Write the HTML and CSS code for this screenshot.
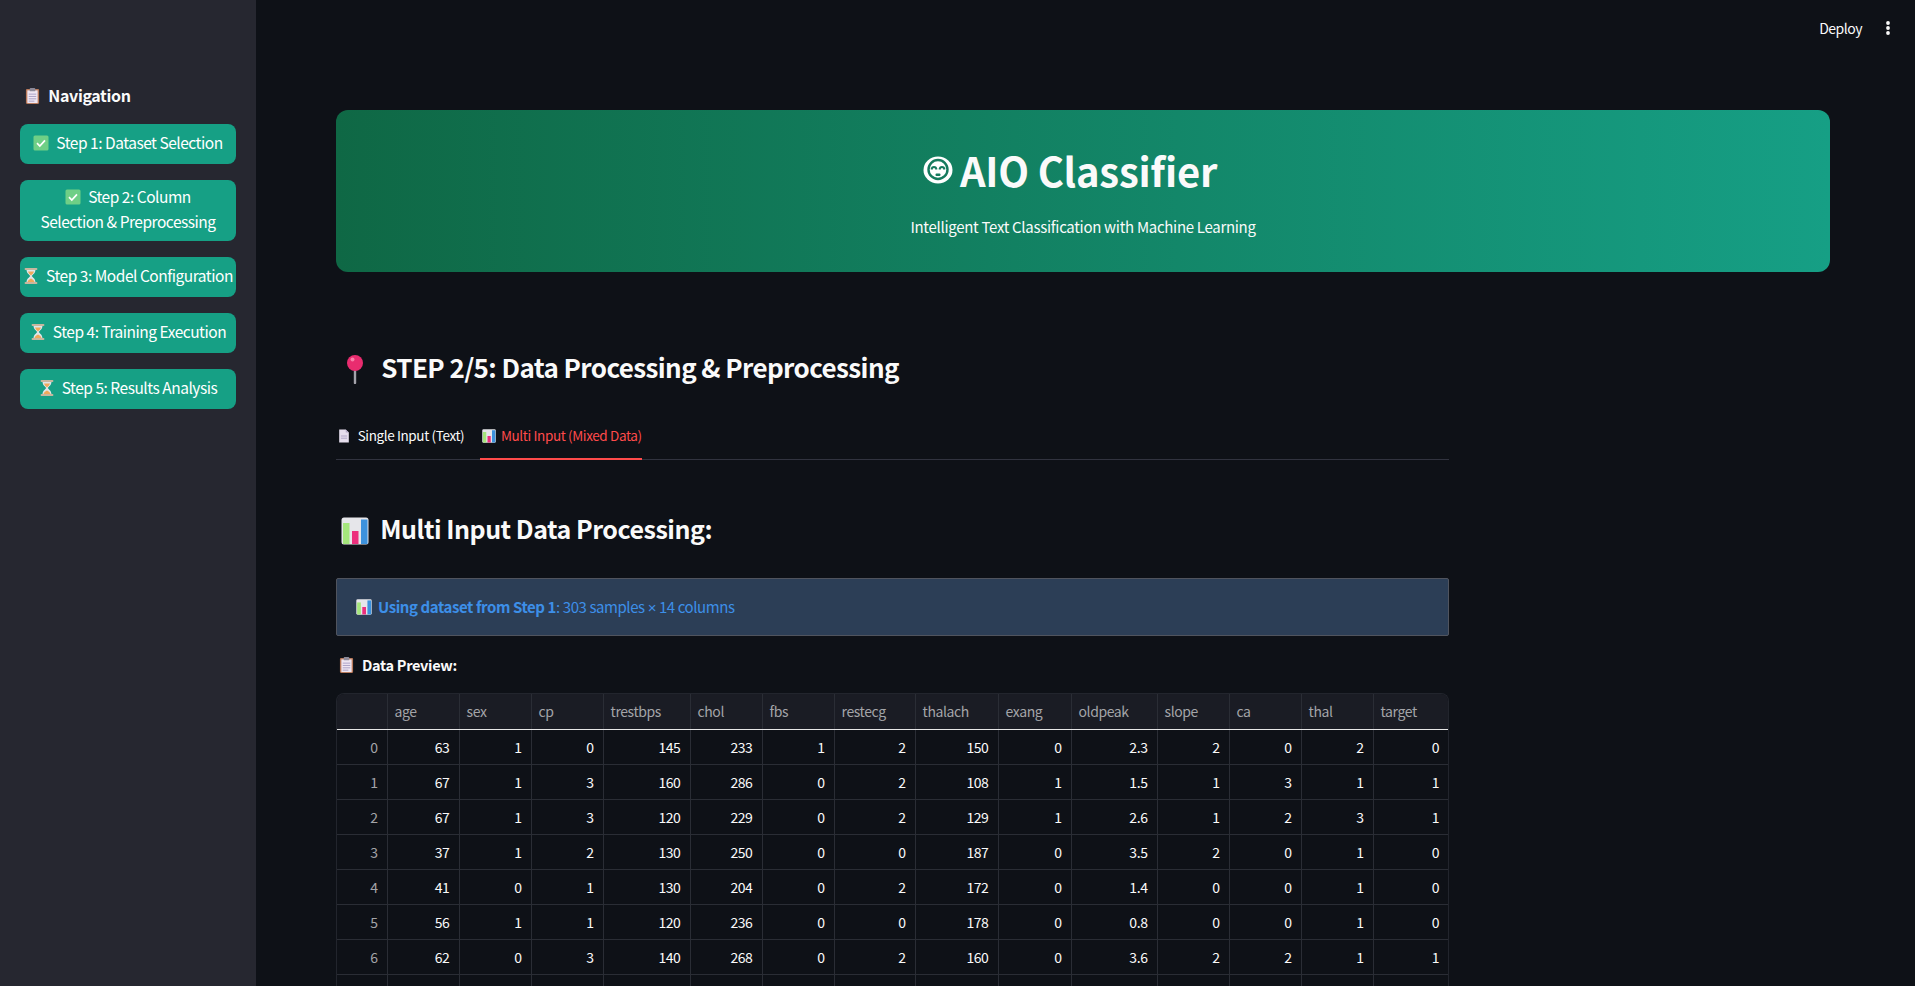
FILE: index.html
```html
<!DOCTYPE html>
<html lang="en">
<head>
  <meta charset="UTF-8">
  <meta name="viewport" content="width=device-width, initial-scale=1.0">
  <title>AIO Classifier</title>
  <link rel="stylesheet" href="styles.css">
</head>
<body>
  <!-- emoji drawn once, reused below -->
  <svg class="defs" width="0" height="0">
    <symbol id="i-clip" viewBox="0 0 16 18">
      <rect x="1" y="1.5" width="14" height="16" rx="1.2" fill="#b9795a"/>
      <rect x="2.5" y="3" width="11" height="13.5" fill="#efe6f2"/>
      <rect x="5" y="0.5" width="6" height="3.5" rx="1" fill="#8d8a99"/>
      <path d="M4 7h8M4 9.5h8M4 12h8M4 14.5h6" stroke="#a99fc4" stroke-width="1"/>
    </symbol>
    <symbol id="i-check" viewBox="0 0 16 16">
      <rect x="0.5" y="0.5" width="15" height="15" rx="1.5" fill="#6fcf86"/>
      <path d="M4 8.2l2.8 2.8L12 5.4" fill="none" stroke="#fff" stroke-width="1.7"/>
    </symbol>
    <symbol id="i-glass" viewBox="0 0 14 16">
      <path d="M2.5 1.5h9c0 4-3 5-3.7 6.500.7 1.500 3.700 2.500 3.700 6.500h-9c0-4 3-5 3.700-6.500C5.500 6.500 2.500 5.500 2.500 1.500z" fill="#dfe6ea"/>
      <path d="M4 3.500h6c-.5 2-2.300 3-3 4-.7-1-2.500-2-3-4zM3.500 14c.3-2 2.500-3 3.500-3.500 1 .5 3.200 1.500 3.500 3.500z" fill="#f0a95a"/>
      <path d="M1.500 1h11M1.500 15h11" stroke="#c8b79f" stroke-width="1.800" stroke-linecap="round"/>
    </symbol>
    <symbol id="i-pin" viewBox="0 0 20 29">
      <path d="M10 14v14" stroke="#a3a3ab" stroke-width="2.400" stroke-linecap="round"/>
      <circle cx="10" cy="8" r="8" fill="#e92c6f"/>
      <circle cx="7.500" cy="4.500" r="2" fill="#f97fa9"/>
    </symbol>
    <symbol id="i-doc" viewBox="0 0 12 16">
      <path d="M0.500 0.500h7.500l3.500 3.500v11.500h-11z" fill="#e6deee"/>
      <path d="M8 0.500l3.500 3.500h-3.500z" fill="#b3a8c6"/>
      <path d="M2.500 8h7M2.500 10.500h7" stroke="#a99fc4" stroke-width="1"/>
    </symbol>
    <symbol id="i-chart" viewBox="0 0 28 28">
      <rect x="0.500" y="0.500" width="27" height="27" rx="2.500" fill="#e6e6ea"/>
      <rect x="2" y="6" width="6.500" height="21" fill="#a5e67c"/>
      <rect x="11" y="14" width="6.500" height="13" fill="#ec2f7d"/>
      <rect x="20" y="2.500" width="6.500" height="24.500" fill="#3d92dd"/>
    </symbol>
    <symbol id="i-bot" viewBox="0 0 30 28">
      <ellipse cx="15" cy="14" rx="14.500" ry="13.500" fill="#fff"/>
      <circle cx="15" cy="13.500" r="9.500" fill="none" stroke="#157a5d" stroke-width="2.400"/>
      <path d="M8.500 13.500c.5-3.500 4.500-3.500 5 0M16.500 13.500c.5-3.500 4.500-3.500 5 0" fill="none" stroke="#157a5d" stroke-width="2"/>
      <rect x="12.500" y="17.500" width="5" height="2.500" rx="1" fill="#157a5d"/>
    </symbol>
  </svg>

  <div class="app">
    <aside class="sidebar">
      <h3 class="nav-title"><svg class="emoji clip"><use href="#i-clip"/></svg> Navigation</h3>
      <a class="step"><span><svg class="emoji"><use href="#i-check"/></svg> Step 1: Dataset Selection</span></a>
      <a class="step"><span><svg class="emoji"><use href="#i-check"/></svg> Step 2: Column<br>Selection &amp; Preprocessing</span></a>
      <a class="step"><span><svg class="emoji"><use href="#i-glass"/></svg> Step 3: Model Configuration</span></a>
      <a class="step"><span><svg class="emoji"><use href="#i-glass"/></svg> Step 4: Training Execution</span></a>
      <a class="step"><span><svg class="emoji"><use href="#i-glass"/></svg> Step 5: Results Analysis</span></a>
    </aside>

    <main class="main">
      <header class="topbar">
        <span class="deploy">Deploy</span>
        <svg class="kebab" width="4" height="14" viewBox="0 0 4 14"><circle cx="2" cy="2" r="1.900"/><circle cx="2" cy="7" r="1.900"/><circle cx="2" cy="12" r="1.900"/></svg>
      </header>

      <section class="hero">
        <h1><svg class="bot"><use href="#i-bot"/></svg>AIO Classifier</h1>
        <p>Intelligent Text Classification with Machine Learning</p>
      </section>

      <div class="content">
        <h2 class="step-title"><svg class="pin"><use href="#i-pin"/></svg> STEP 2/5: Data Processing &amp; Preprocessing</h2>

        <div class="tabs">
          <div class="tab"><svg class="tab-icon doc"><use href="#i-doc"/></svg> Single Input (Text)</div>
          <div class="tab active"><svg class="tab-icon"><use href="#i-chart"/></svg> Multi Input (Mixed Data)</div>
        </div>

        <h3 class="section-title"><svg class="chart"><use href="#i-chart"/></svg> Multi Input Data Processing:</h3>

        <div class="info"><svg class="info-icon"><use href="#i-chart"/></svg> <b>Using dataset from Step 1</b>: 303 samples <span class="times">×</span> 14 columns</div>

        <p class="preview-label"><svg class="emoji clip"><use href="#i-clip"/></svg> Data Preview:</p>

        <div class="table-wrap">
          <table class="data">
            <colgroup>
              <col class="c50"><col class="c72"><col class="c72"><col class="c72"><col class="c87"><col class="c72"><col class="c72">
              <col class="c81"><col class="c83"><col class="c73"><col class="c86"><col class="c72"><col class="c72"><col class="c72"><col>
            </colgroup>
            <thead>
              <tr><th></th><th>age</th><th>sex</th><th>cp</th><th>trestbps</th><th>chol</th><th>fbs</th><th>restecg</th><th>thalach</th><th>exang</th><th>oldpeak</th><th>slope</th><th>ca</th><th>thal</th><th>target</th></tr>
            </thead>
            <tbody>
              <tr><td>0</td><td>63</td><td>1</td><td>0</td><td>145</td><td>233</td><td>1</td><td>2</td><td>150</td><td>0</td><td>2.3</td><td>2</td><td>0</td><td>2</td><td>0</td></tr>
              <tr><td>1</td><td>67</td><td>1</td><td>3</td><td>160</td><td>286</td><td>0</td><td>2</td><td>108</td><td>1</td><td>1.5</td><td>1</td><td>3</td><td>1</td><td>1</td></tr>
              <tr><td>2</td><td>67</td><td>1</td><td>3</td><td>120</td><td>229</td><td>0</td><td>2</td><td>129</td><td>1</td><td>2.6</td><td>1</td><td>2</td><td>3</td><td>1</td></tr>
              <tr><td>3</td><td>37</td><td>1</td><td>2</td><td>130</td><td>250</td><td>0</td><td>0</td><td>187</td><td>0</td><td>3.5</td><td>2</td><td>0</td><td>1</td><td>0</td></tr>
              <tr><td>4</td><td>41</td><td>0</td><td>1</td><td>130</td><td>204</td><td>0</td><td>2</td><td>172</td><td>0</td><td>1.4</td><td>0</td><td>0</td><td>1</td><td>0</td></tr>
              <tr><td>5</td><td>56</td><td>1</td><td>1</td><td>120</td><td>236</td><td>0</td><td>0</td><td>178</td><td>0</td><td>0.8</td><td>0</td><td>0</td><td>1</td><td>0</td></tr>
              <tr><td>6</td><td>62</td><td>0</td><td>3</td><td>140</td><td>268</td><td>0</td><td>2</td><td>160</td><td>0</td><td>3.6</td><td>2</td><td>2</td><td>1</td><td>1</td></tr>
              <tr><td></td><td></td><td></td><td></td><td></td><td></td><td></td><td></td><td></td><td></td><td></td><td></td><td></td><td></td><td></td></tr>
            </tbody>
          </table>
        </div>
      </div>
    </main>
  </div>
</body>
</html>
```

FILE: styles.css
```css
* {
  box-sizing: border-box;
}

html, body {
  height: 100%;
  margin: 0;
  overflow: hidden;
}

body {
  background-color: #0e1117;
  color: #fafafa;
  font-family: "Noto Sans CJK SC", "Noto Sans", sans-serif;
}

.defs {
  display: block;
  height: 0;
}

.app {
  display: flex;
  height: 100vh;
}

/* sidebar */
.sidebar {
  flex: 0 0 256px;
  display: flex;
  flex-direction: column;
  padding: 81px 20px 0;
  background-color: #262730;
}

.nav-title {
  margin: 0 0 15px 5px;
  height: 28px;
  font-size: 16px;
  font-weight: 700;
  letter-spacing: -0.35px;
  line-height: 28px;
  white-space: nowrap;
}

.emoji {
  display: inline-block;
  width: 16px;
  height: 16px;
  vertical-align: -2px;
  margin-right: 4px;
}

.emoji.clip {
  width: 15px;
  height: 18px;
  vertical-align: -3px;
  margin-right: 5px;
}

.step {
  display: flex;
  align-items: center;
  justify-content: center;
  min-height: 40px;
  margin-bottom: 16px;
  padding: 4px 2px 7px;
  background-color: #16a085;
  border-radius: 8px;
  font-size: 15.500px;
  letter-spacing: -0.48px;
  line-height: 25px;
  text-align: center;
  white-space: nowrap;
  color: #fff;
}

/* main area */
.main {
  flex: 1;
  min-width: 0;
  padding: 0 85px 0 80px;
}

.topbar {
  display: flex;
  align-items: center;
  justify-content: flex-end;
  gap: 24px;
  height: 56px;
  margin-right: -60px;
  font-size: 14px;
  letter-spacing: -0.5px;
}

.kebab {
  fill: #fafafa;
}

.hero {
  height: 162px;
  margin-top: 54px;
  padding-top: 30px;
  background: linear-gradient(90deg, #0f6845, #169f85);
  border-radius: 12px;
  text-align: center;
}

.hero h1 {
  margin: 0;
  height: 60px;
  padding-right: 26px;
  font-size: 40px;
  font-weight: 700;
  letter-spacing: -0.25px;
  line-height: 60px;
}

.bot {
  width: 30px;
  height: 28px;
  margin-right: 7px;
  vertical-align: 3px;
}

.hero p {
  margin: 16px 0 0;
  font-size: 15px;
  letter-spacing: -0.3px;
  line-height: 22px;
}

.content {
  width: 1113px;
}

.step-title {
  margin: 67px 0 0;
  height: 56px;
  padding-left: 9px;
  font-size: 26px;
  font-weight: 700;
  letter-spacing: -0.6px;
  line-height: 56px;
}

.pin {
  width: 20px;
  height: 29px;
  vertical-align: -6px;
  margin-right: 11px;
}

/* tabs */
.tabs {
  display: flex;
  gap: 16px;
  margin-top: 25px;
  height: 40px;
  border-bottom: 1px solid #31333f;
}

.tab {
  height: 40px;
  font-size: 13.500px;
  letter-spacing: -0.38px;
  line-height: 31px;
  white-space: nowrap;
}

.tab.active {
  color: #ff4b4b;
  border-bottom: 2px solid #ff4b4b;
}

.tab-icon {
  width: 14px;
  height: 14px;
  vertical-align: -2px;
  margin: 0 2px;
}

.tab-icon.doc {
  width: 12px;
  margin: 0 5px 0 2px;
}

.section-title {
  margin: 48px 0 0;
  height: 40px;
  padding-left: 5px;
  font-size: 25px;
  font-weight: 700;
  letter-spacing: -0.48px;
  line-height: 40px;
}

.chart {
  width: 28px;
  height: 28px;
  vertical-align: -6px;
  margin-right: 6px;
}

/* info box */
.info {
  height: 58px;
  margin-top: 30px;
  padding-left: 19px;
  background-color: #2c3e56;
  border: 1px solid #50545e;
  border-radius: 2px;
  color: #3d8fe8;
  font-size: 15px;
  letter-spacing: -0.42px;
  line-height: 56px;
}

.info b {
  font-weight: 700;
}

.times {
  font-family: "Liberation Sans", sans-serif;
}

.info-icon {
  width: 16px;
  height: 16px;
  vertical-align: -2px;
  margin-right: 3px;
}

.preview-label {
  margin: 15px 0 0;
  height: 28px;
  padding-left: 3px;
  font-size: 14.500px;
  font-weight: 700;
  letter-spacing: -0.3px;
  line-height: 28px;
}

/* dataframe */
.table-wrap {
  margin-top: 14px;
  border: 1px solid #22252d;
  border-bottom: 0;
  border-radius: 8px 8px 0 0;
  overflow: hidden;
}

.data {
  width: 100%;
  table-layout: fixed;
  border-collapse: collapse;
  font-size: 14px;
  letter-spacing: -0.4px;
}

.c50 { width: 50px; }
.c72 { width: 72px; }
.c73 { width: 73px; }
.c81 { width: 81px; }
.c83 { width: 83px; }
.c86 { width: 86px; }
.c87 { width: 87px; }

.data th {
  height: 35px;
  padding: 0 7px;
  background-color: #1a1c24;
  border-right: 1px solid #2a2d35;
  border-bottom: 1px solid #e6e6e6;
  color: #a3a4a8;
  font-weight: 400;
  text-align: left;
}

.data td {
  height: 35px;
  padding: 0 9px 0 0;
  border-right: 1px solid #2a2d35;
  border-bottom: 1px solid #2a2d35;
  text-align: right;
}

.data td:first-child {
  color: #a3a4a8;
}

.data th:last-child,
.data td:last-child {
  border-right: 0;
}
```
